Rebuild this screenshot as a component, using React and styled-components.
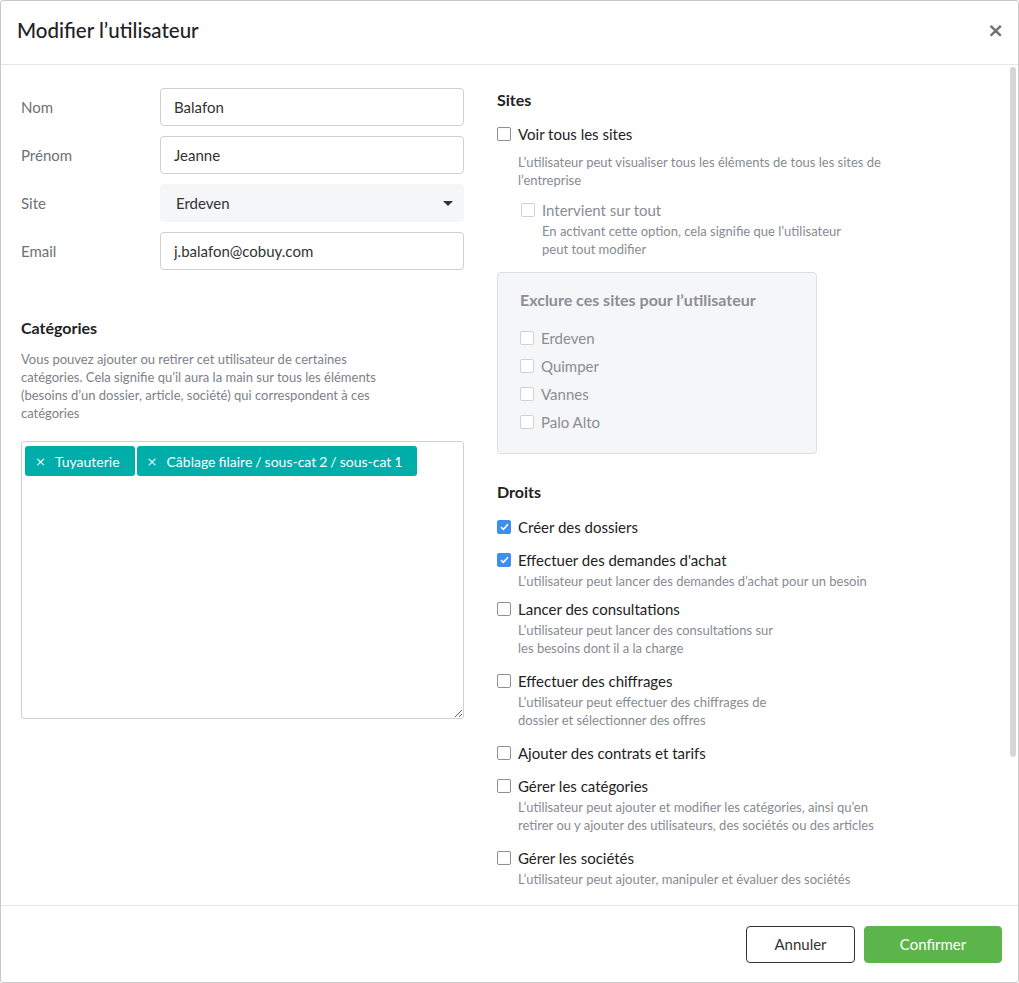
import React from "react";
import styled, { createGlobalStyle } from "styled-components";

const GlobalStyle = createGlobalStyle`
  html, body {
    margin: 0;
    padding: 0;
    background: #fff;
    font-family: Lato, "Open Sans", sans-serif;
  }
  * { box-sizing: border-box; }
`;

const Dialog = styled.div`
  width: 1019px;
  height: 983px;
  border: 1px solid #c9c9c9;
  border-radius: 3px;
  display: flex;
  flex-direction: column;
  background: #fff;
  overflow: hidden;
`;

const Header = styled.div`
  height: 64px;
  flex: none;
  display: flex;
  align-items: center;
  justify-content: space-between;
  padding: 0 14px 6px 16px;
  border-bottom: 1px solid #e6e6e6;
`;

const Title = styled.h1`
  margin: 0;
  font-size: 20.5px;
  font-weight: 500;
  color: #222;
`;

const Close = styled.button`
  border: 0;
  background: none;
  padding: 0;
  font-size: 20px;
  font-weight: 700;
  color: #6f6f6f;
  line-height: 1;
  cursor: pointer;
  font-family: "DejaVu Sans", sans-serif;
`;

const Body = styled.div`
  flex: 1;
  min-height: 0;
  display: flex;
`;

const ScrollArea = styled.div`
  flex: 1;
  overflow: hidden;
  padding: 23px 0 0 20px;
  display: grid;
  grid-template-columns: 443px 1fr;
  column-gap: 33px;
  align-items: start;
`;

const Rail = styled.div`
  width: 12px;
  flex: none;
  padding: 2px 2px 0 4px;
`;

const Thumb = styled.div`
  height: 690px;
  border-radius: 3px;
  background: #d6d6d6;
`;

const Column = styled.div`
  display: flex;
  flex-direction: column;
`;

const FormRow = styled.div`
  display: flex;
  align-items: center;
  margin-bottom: 10px;
`;

const Label = styled.label`
  width: 139px;
  font-size: 15px;
  color: #6d7178;
`;

const Input = styled.input`
  width: 304px;
  height: 38px;
  border: 1px solid #cfd1d4;
  border-radius: 4px;
  padding: 0 13px;
  font-family: inherit;
  font-size: 15px;
  color: #333;
  outline: none;
`;

const Select = styled.div`
  width: 304px;
  height: 38px;
  border-radius: 4px;
  background: #f5f6f8;
  padding: 0 11px 0 16px;
  display: flex;
  align-items: center;
  justify-content: space-between;
  font-size: 15px;
  color: #333;
`;

const Caret = styled.span`
  width: 0;
  height: 0;
  border-left: 5px solid transparent;
  border-right: 5px solid transparent;
  border-top: 5px solid #333;
`;

const SectionTitle = styled.h2`
  margin: ${(p) => p.$top || 0}px 0 ${(p) => p.$bottom || 0}px 0;
  font-size: 16px;
  font-weight: 700;
  color: #222;
`;

const Help = styled.p`
  margin: 0;
  font-size: 13px;
  line-height: 18px;
  color: #7d8188;
  max-width: ${(p) => p.$max || 400}px;
`;

const TagBox = styled.div`
  margin-top: 19px;
  height: 278px;
  border: 1px solid #cfd1d4;
  border-radius: 3px;
  padding: 4px 3px;
  display: flex;
  flex-wrap: wrap;
  align-content: flex-start;
  gap: 2px;
  resize: vertical;
  overflow: hidden;
`;

const Tag = styled.span`
  height: 30px;
  display: inline-flex;
  align-items: center;
  gap: 9px;
  padding: 0 15px 0 10px;
  background: #00aea9;
  color: #fff;
  border-radius: 3px;
  font-size: 14px;
  word-spacing: -0.6px;
`;

const TagX = styled.span`
  font-size: 13px;
  font-family: "DejaVu Sans", sans-serif;
  opacity: 0.9;
`;

const Option = styled.div`
  display: grid;
  grid-template-columns: 14px 1fr;
  column-gap: 7px;
  margin-left: ${(p) => p.$indent || 0}px;
  margin-bottom: ${(p) => (p.$gap === undefined ? 11 : p.$gap)}px;
`;

const Box = styled.span`
  width: 14px;
  height: 14px;
  margin-top: 4px;
  border-radius: 2px;
  border: 1px solid ${(p) => (p.$checked ? "#3e8ef0" : p.$disabled ? "#cfd1d4" : "#8d9096")};
  background: ${(p) => (p.$checked ? "#3e8ef0" : "#fff")};
  display: flex;
  align-items: center;
  justify-content: center;
`;

const OptLabel = styled.span`
  font-size: 15px;
  line-height: 22px;
  color: ${(p) => (p.$disabled ? "#8a8d93" : "#222")};
`;

const OptHelp = styled.span`
  grid-column: 2;
  font-size: 13px;
  line-height: 18px;
  color: #878b92;
  margin-top: ${(p) => p.$mt || 1}px;
  margin-bottom: ${(p) => p.$mb || 0}px;
`;

const Exclude = styled.div`
  width: 320px;
  margin-top: 14px;
  background: #f5f6f8;
  border: 1px solid #dcdee1;
  border-radius: 4px;
  padding: 17px 22px 14px 22px;
`;

const ExcludeTitle = styled.div`
  font-size: 16px;
  font-weight: 700;
  color: #8b8e93;
  margin-bottom: 18px;
`;

const Footer = styled.div`
  height: 77px;
  flex: none;
  border-top: 1px solid #e6e6e6;
  display: flex;
  align-items: center;
  justify-content: flex-end;
  gap: 9px;
  padding: 0 16px 0 0;
`;

const Button = styled.button`
  height: 37px;
  width: ${(p) => p.$w}px;
  border-radius: 4px;
  font-family: inherit;
  font-size: 15px;
  cursor: pointer;
  border: 1px solid ${(p) => (p.$primary ? "#5cb54a" : "#333")};
  background: ${(p) => (p.$primary ? "#5cb54a" : "#fff")};
  color: ${(p) => (p.$primary ? "#fff" : "#333")};
`;

const Check = () => (
  <svg width="9" height="8" viewBox="0 0 9 8">
    <path d="M1 4.2 L3.4 6.4 L8 1.2" fill="none" stroke="#fff" strokeWidth="1.6" />
  </svg>
);

const CheckOption = ({ label, help, checked, disabled, indent, gap, helpMt, helpMb }) => (
  <Option $indent={indent} $gap={gap}>
    <Box $checked={checked} $disabled={disabled}>{checked && <Check />}</Box>
    <OptLabel $disabled={disabled}>{label}</OptLabel>
    {help && (
      <OptHelp $mt={helpMt} $mb={helpMb}>
        {help.map((line, i) => (
          <React.Fragment key={i}>
            {line}
            {i < help.length - 1 && <br />}
          </React.Fragment>
        ))}
      </OptHelp>
    )}
  </Option>
);

const rights = [
  { label: "Créer des dossiers", checked: true },
  {
    label: "Effectuer des demandes d'achat",
    checked: true,
    help: ["L’utilisateur peut lancer des demandes d’achat pour un besoin"],
  },
  {
    label: "Lancer des consultations",
    help: ["L’utilisateur peut lancer des consultations sur", "les besoins dont il a la charge"],
  },
  {
    label: "Effectuer des chiffrages",
    help: ["L’utilisateur peut effectuer des chiffrages de", "dossier et sélectionner des offres"],
  },
  { label: "Ajouter des contrats et tarifs" },
  {
    label: "Gérer les catégories",
    help: [
      "L’utilisateur peut ajouter et modifier les catégories, ainsi qu’en",
      "retirer ou y ajouter des utilisateurs, des sociétés ou des articles",
    ],
  },
  {
    label: "Gérer les sociétés",
    help: ["L’utilisateur peut ajouter, manipuler et évaluer des sociétés"],
  },
];

const gapFor = (r) => {
  if (!r.help) return 11;
  return r.help.length > 1 ? 13 : 8;
};

export default function App() {
  return (
    <>
      <GlobalStyle />
      <Dialog>
        <Header>
          <Title>Modifier l’utilisateur</Title>
          <Close>×</Close>
        </Header>
        <Body>
          <ScrollArea>
            <Column>
              <FormRow>
                <Label>Nom</Label>
                <Input defaultValue="Balafon" />
              </FormRow>
              <FormRow>
                <Label>Prénom</Label>
                <Input defaultValue="Jeanne" />
              </FormRow>
              <FormRow>
                <Label>Site</Label>
                <Select>
                  Erdeven
                  <Caret />
                </Select>
              </FormRow>
              <FormRow>
                <Label>Email</Label>
                <Input defaultValue="j.balafon@cobuy.com" />
              </FormRow>
              <SectionTitle $top={38} $bottom={13}>Catégories</SectionTitle>
              <Help $max={360}>
                Vous pouvez ajouter ou retirer cet utilisateur de certaines catégories. Cela signifie
                qu’il aura la main sur tous les éléments (besoins d’un dossier, article, société) qui
                correspondent à ces catégories
              </Help>
              <TagBox>
                <Tag>
                  <TagX>×</TagX>Tuyauterie
                </Tag>
                <Tag>
                  <TagX>×</TagX>Câblage filaire / sous-cat 2 / sous-cat 1
                </Tag>
              </TagBox>
            </Column>
            <Column>
              <SectionTitle $top={2} $bottom={14}>Sites</SectionTitle>
              <CheckOption
                label="Voir tous les sites"
                help={[
                  "L’utilisateur peut visualiser tous les éléments de tous les sites de",
                  "l’entreprise",
                ]}
                helpMt={8}
                helpMb={10}
                gap={0}
              />
              <CheckOption
                label="Intervient sur tout"
                disabled
                indent={24}
                help={["En activant cette option, cela signifie que l’utilisateur", "peut tout modifier"]}
                gap={0}
              />
              <Exclude>
                <ExcludeTitle>Exclure ces sites pour l’utilisateur</ExcludeTitle>
                {["Erdeven", "Quimper", "Vannes", "Palo Alto"].map((s) => (
                  <CheckOption key={s} label={s} disabled gap={6} />
                ))}
              </Exclude>
              <SectionTitle $top={28} $bottom={15}>Droits</SectionTitle>
              {rights.map((r) => (
                <CheckOption key={r.label} {...r} gap={gapFor(r)} />
              ))}
            </Column>
          </ScrollArea>
          <Rail>
            <Thumb />
          </Rail>
        </Body>
        <Footer>
          <Button $w={109}>Annuler</Button>
          <Button $w={138} $primary>
            Confirmer
          </Button>
        </Footer>
      </Dialog>
    </>
  );
}
